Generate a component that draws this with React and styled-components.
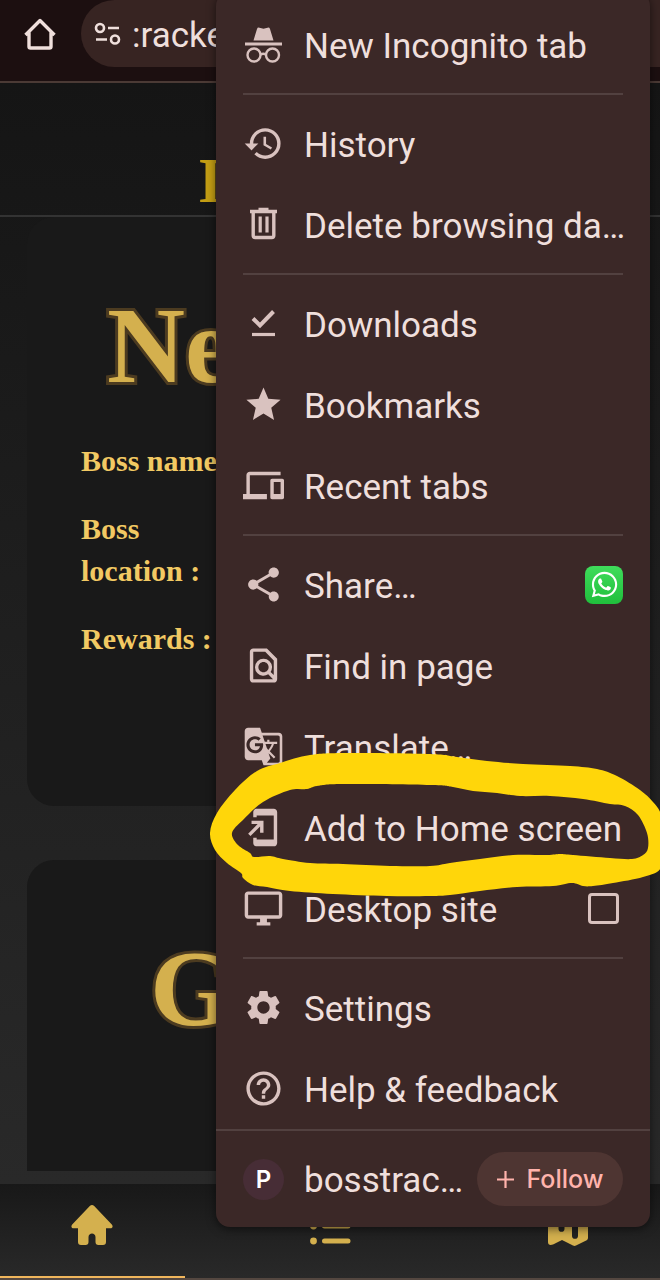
import React from 'react';
import styled, { createGlobalStyle } from 'styled-components';
import {
  MdHistory,
  MdStar,
  MdDevices,
  MdShare,
  MdOutlineFindInPage,
  MdGTranslate,
  MdAddToHomeScreen,
  MdOutlineDesktopWindows,
  MdSettings,
  MdHelpOutline,
} from 'react-icons/md';
import { FaWhatsapp } from 'react-icons/fa';

const color = {
  chrome: '#1c0f10',
  surface: '#3b2827',
  pill: '#372422',
  line: '#524140',
  text: '#efdfdc',
  icon: '#d9c2bf',
  gold: '#d4b04e',
  label: '#f2c963',
  card: '#191919',
};

const GlobalStyle = createGlobalStyle`
  *, *::before, *::after { box-sizing: border-box; }
  body {
    margin: 0;
    overflow-x: hidden;
    background: #161616;
    font-family: Roboto, "Liberation Sans", sans-serif;
  }
  button { font: inherit; color: inherit; border: 0; background: none; padding: 0; }
`;

const Screen = styled.div`
  position: relative;
  display: flex;
  flex-direction: column;
  min-height: 100vh;
  overflow: hidden;
`;

const BrowserBar = styled.header`
  display: flex;
  height: 83px;
  padding-left: 20px;
  background: ${color.chrome};
  border-bottom: 2px solid #4b3a35;
  color: ${color.text};
`;

const BarButton = styled.button`
  display: flex;
  align-items: center;
  justify-content: center;
  width: 40px;
  height: 68px;
`;

const AddressPill = styled.div`
  flex: 1;
  display: flex;
  align-items: center;
  gap: 10px;
  height: 67px;
  margin-left: 21px;
  padding-left: 13px;
  border-radius: 34px 0 0 34px;
  background: ${color.pill};
`;

const AddressText = styled.div`
  padding-top: 4px;
  font-size: 35px;
  line-height: 44px;
  white-space: nowrap;
`;

const Site = styled.div`
  flex: 1;
  display: flex;
  flex-direction: column;
  background: linear-gradient(#151515, #292929);
  font-family: "Liberation Serif", serif;
  font-weight: 700;
`;

const SiteHeader = styled.div`
  padding: 66px 0 2px 198px;
  border-bottom: 2px solid #333333;
  color: #c49e14;
  font-size: 64px;
  line-height: 64px;
`;

const Cards = styled.main`
  flex: 1;
  display: flex;
  flex-direction: column;
  gap: 54px;
  padding: 0 27px 13px;
`;

const Card = styled.section`
  flex: ${(p) => (p.$fill ? '1 0 auto' : 'none')};
  min-height: ${(p) => (p.$fill ? 0 : '589px')};
  padding: 81px 54px 0;
  border-radius: ${(p) => (p.$fill ? '27px 27px 0 0' : '27px')};
  background: ${color.card};
`;

const CardTitle = styled.h2`
  margin: 0 0 46px;
  padding-left: ${(p) => p.$indent}px;
  color: ${color.gold};
  font-size: 108px;
  line-height: 96px;
  -webkit-text-stroke: 6px #4c3b20;
  paint-order: stroke fill;
`;

const FieldList = styled.div`
  display: flex;
  flex-direction: column;
  gap: 26px;
  width: 140px;
  color: ${color.label};
  font-size: 30px;
  line-height: 42px;
`;

const TabBar = styled.nav`
  display: flex;
  justify-content: space-between;
  height: 96px;
  background: linear-gradient(#181818, #292929);
  border-bottom: 2px solid #544740;
`;

const Tab = styled.a`
  display: flex;
  justify-content: center;
  width: 28%;
  padding-top: 20px;
  border-bottom: 2px solid ${(p) => (p.$active ? '#f0b65c' : 'transparent')};
  color: ${color.gold};
`;

const Menu = styled.div`
  position: absolute;
  top: -8px;
  right: 10px;
  width: min(434px, calc(100% - 20px));
  padding-top: 12px;
  border-radius: 14px;
  background: ${color.surface};
  color: ${color.text};
  box-shadow: 0 2px 10px rgba(0, 0, 0, 0.55);
`;

const MenuItem = styled.button`
  position: relative;
  display: flex;
  align-items: center;
  gap: 20px;
  width: 100%;
  height: 81px;
  padding: 0 27px;
  font-size: 35px;
  line-height: 44px;
  text-align: left;
  white-space: nowrap;
`;

const ItemIcon = styled.span`
  flex: none;
  display: flex;
  color: ${color.icon};
  svg { width: 41px; height: 41px; }
`;

const ItemLabel = styled.span`
  flex: 1;
  padding-top: 4px;
`;

const Divider = styled.hr`
  height: 2px;
  margin: 8px 27px;
  border: 0;
  background: ${color.line};
`;

const ShareTarget = styled.span`
  display: flex;
  align-items: center;
  justify-content: center;
  width: 38px;
  height: 38px;
  border-radius: 8px;
  background: linear-gradient(#3fdc5b, #20bf3c);
  color: #ffffff;
`;

const Checkbox = styled.input`
  appearance: none;
  width: 31px;
  height: 31px;
  margin: 0 4px 0 0;
  border: 3px solid ${color.icon};
  border-radius: 4px;
`;

const MenuFooter = styled.div`
  display: flex;
  align-items: center;
  gap: 20px;
  height: 98px;
  padding: 0 27px;
  border-top: 2px solid ${color.line};
  font-size: 35px;
  line-height: 44px;
`;

const Avatar = styled.span`
  flex: none;
  display: flex;
  align-items: center;
  justify-content: center;
  width: 41px;
  height: 41px;
  border-radius: 50%;
  background: #472d36;
  color: #ffffff;
  font: 600 24px Inter, sans-serif;
`;

const FooterLabel = styled(ItemLabel)`
  width: 0;
  white-space: nowrap;
`;

const FollowButton = styled.button`
  && {
    flex: none;
    display: flex;
    align-items: center;
    justify-content: center;
    gap: 13px;
    width: 146px;
    height: 54px;
    margin-left: -8px;
    border-radius: 27px;
    background: #4e3532;
    color: #ffb3ac;
    font: 500 25px Inter, sans-serif;
  }
`;

const Marker = styled.svg`
  position: absolute;
  z-index: 1;
  top: -37px;
  left: -10px;
  pointer-events: none;
`;

// Closed Catmull-Rom curve through the points, as cubic Béziers.
function smoothLoop(points) {
  const n = points.length;
  const at = (i) => points[(i + n) % n];
  let d = `M${points[0].join(' ')}`;
  for (let i = 0; i < n; i += 1) {
    const [a, b, c, e] = [at(i - 1), at(i), at(i + 1), at(i + 2)];
    d += `C${b[0] + (c[0] - a[0]) / 6} ${b[1] + (c[1] - a[1]) / 6} ${c[0] - (e[0] - b[0]) / 6} ${c[1] - (e[1] - b[1]) / 6} ${c[0]} ${c[1]}`;
  }
  return `${d}Z`;
}

const OUTER = [
  [210, 833], [217, 813], [235, 790], [257, 771], [280, 763], [310, 755], [347, 753], [430, 754],
  [457, 757], [487, 761], [523, 764], [570, 766], [597, 769], [617, 776], [640, 790], [653, 802],
  [661, 814], [668, 840], [661, 868], [643, 877], [613, 883], [593, 886], [583, 886], [572, 883],
  [553, 886], [517, 887], [480, 891], [450, 895], [430, 896], [387, 896], [333, 894], [290, 891],
  [267, 887], [253, 885], [243, 878], [241, 873], [227, 863], [215, 850],
];
const INNER = [
  [232, 833], [243, 820], [263, 802], [290, 790], [307, 789], [317, 786], [343, 784], [430, 785],
  [453, 787], [473, 791], [497, 793], [520, 796], [550, 796], [583, 799], [610, 804], [625, 806],
  [638, 815], [647, 833], [648, 848], [643, 855], [632, 859], [610, 858], [573, 855], [560, 854],
  [547, 855], [513, 855], [480, 859], [450, 863], [430, 866], [390, 866], [343, 864], [310, 863],
  [283, 859], [270, 856], [254, 857], [250, 853], [238, 845],
];

const HandDrawnRing = () => (
  <Marker width="464" height="150" viewBox="206 750 464 150" aria-hidden="true">
    <path d={smoothLoop(OUTER) + smoothLoop(INNER)} fill="#ffd60a" fillRule="evenodd" />
  </Marker>
);

const HomeOutline = () => (
  <svg width="32" height="32" viewBox="0 0 32 32" fill="none" stroke="currentColor" strokeWidth="3.400">
    <path d="M1.500 17 16 2.500 30.500 17M5 14v14.500q0 1.500 1.500 1.500h19q1.500 0 1.500-1.500V14" strokeLinejoin="round" />
  </svg>
);

const TuneIcon = () => (
  <svg width="28" height="24" viewBox="0 0 28 24" fill="none" stroke="currentColor" strokeWidth="2.600">
    <circle cx="6" cy="6" r="4" />
    <path d="M14 6h11M2 17.500h11" />
    <circle cx="21" cy="17.500" r="4" />
  </svg>
);

const IncognitoIcon = () => (
  <svg viewBox="0 0 41 41" fill="none" stroke="currentColor">
    <path d="M10.500 16.500 14 5q.6-1.800 2.400-1.300l4.100 1 4.100-1Q26.400 3.200 27 5l3.500 11.500z" fill="currentColor" stroke="none" />
    <path d="M2 20h37" strokeWidth="3" />
    <g strokeWidth="2.400">
      <circle cx="11" cy="31" r="6.500" />
      <circle cx="29.500" cy="31" r="6.500" />
      <path d="M17.500 30.500q2.800-1.600 5.500 0" />
    </g>
  </svg>
);

const TrashIcon = () => (
  <svg viewBox="0 0 41 41" fill="none" stroke="currentColor" strokeWidth="3.400">
    <path d="M10.200 7v24.500q0 2 2 2h16.600q2 0 2-2V7" />
    <path d="M7 7.500h27M15.500 5.500h10" />
    <path d="M17.200 12.500v16M24 12.500v16" strokeWidth="3.200" />
  </svg>
);

const DownloadsIcon = () => (
  <svg viewBox="0 0 41 41" fill="none" stroke="currentColor">
    <path d="M10 15.500 17 22.500 30.500 8.500" strokeWidth="4" />
    <path d="M9 31.500h23" strokeWidth="3.200" />
  </svg>
);

const HomeIcon = () => (
  <svg width="42" height="42" viewBox="0 0 42 42" fill="currentColor">
    <path d="M18.800 2q2.200-2 4.400 0l17.600 18.600c1.600 1.800.6 3.600-1.400 3.600H35V38q0 3-3 3h-4.500q-3 0-3-3v-5c0-4.700-7-4.700-7 0v5q0 3-3 3H10q-3 0-3-3V24.200H2.600c-2 0-3-1.800-1.400-3.600z" />
  </svg>
);

const ListIcon = () => (
  <svg width="42" height="42" viewBox="0 0 42 42" fill="none" stroke="currentColor" strokeWidth="5" strokeLinecap="round">
    <path d="M15.500 7H39M15.500 22H39M15.500 37H39" />
    <g fill="currentColor" stroke="none">
      <circle cx="4.500" cy="7" r="3.400" />
      <circle cx="4.500" cy="22" r="3.400" />
      <circle cx="4.500" cy="37" r="3.400" />
    </g>
  </svg>
);

const MapIcon = () => (
  <svg width="42" height="42" viewBox="0 0 42 42" fill="currentColor">
    <path
      fillRule="evenodd"
      d="M1 8q0-1.500 1.300-2.200L12 1.300q1.500-.6 3 0L27 7l10-4.600q4-1.400 4 2V34q0 1.500-1.300 2.200L29 41.500q-1.500.8-3 0L15 36l-9 4.600Q1 42 1 38zM11.500 9v16c0 3.800 6 3.800 6 0V9c0-3.400-6-3.400-6 0zm13.500 7v16c0 3.800 6 3.800 6 0V16c0-3.400-6-3.400-6 0z"
    />
  </svg>
);

const PlusIcon = () => (
  <svg width="17" height="17" viewBox="0 0 17 17" stroke="currentColor" strokeWidth="2.200">
    <path d="M8.500 0v17M0 8.500h17" />
  </svg>
);

const sections = [
  [{ icon: IncognitoIcon, label: 'New Incognito tab' }],
  [
    { icon: MdHistory, label: 'History' },
    { icon: TrashIcon, label: 'Delete browsing da…' },
  ],
  [
    { icon: DownloadsIcon, label: 'Downloads' },
    { icon: MdStar, label: 'Bookmarks' },
    { icon: MdDevices, label: 'Recent tabs' },
  ],
  [
    { icon: MdShare, label: 'Share…', extra: <ShareTarget><FaWhatsapp size={29} /></ShareTarget> },
    { icon: MdOutlineFindInPage, label: 'Find in page' },
    { icon: MdGTranslate, label: 'Translate…' },
    { icon: MdAddToHomeScreen, label: 'Add to Home screen', extra: <HandDrawnRing /> },
    { icon: MdOutlineDesktopWindows, label: 'Desktop site', checkbox: true },
  ],
  [
    { icon: MdSettings, label: 'Settings' },
    { icon: MdHelpOutline, label: 'Help & feedback' },
  ],
];

export default function App() {
  return (
    <>
      <GlobalStyle />
      <Screen>
        <BrowserBar>
          <BarButton aria-label="Home"><HomeOutline /></BarButton>
          <AddressPill>
            <TuneIcon />
            <AddressText>:racke</AddressText>
          </AddressPill>
        </BrowserBar>

        <Site>
          <SiteHeader>I</SiteHeader>
          <Cards>
            <Card>
              <CardTitle $indent={26}>Ne</CardTitle>
              <FieldList>
                <div>Boss name</div>
                <div>Boss location :</div>
                <div>Rewards :</div>
              </FieldList>
            </Card>
            <Card $fill>
              <CardTitle $indent={69}>G</CardTitle>
            </Card>
          </Cards>
        </Site>

        <TabBar>
          <Tab href="#home" aria-label="Home" $active><HomeIcon /></Tab>
          <Tab href="#list" aria-label="List"><ListIcon /></Tab>
          <Tab href="#map" aria-label="Map"><MapIcon /></Tab>
        </TabBar>

        <Menu>
          {sections.map((items, s) => (
            <React.Fragment key={items[0].label}>
              {s > 0 && <Divider />}
              {items.map(({ icon: Icon, label, extra, checkbox }) => (
                <MenuItem
                  key={label}
                  as={checkbox ? 'label' : 'button'}
                  htmlFor={checkbox ? 'desktop-site' : undefined}
                >
                  <ItemIcon><Icon /></ItemIcon>
                  <ItemLabel>{label}</ItemLabel>
                  {extra}
                  {checkbox && <Checkbox id="desktop-site" type="checkbox" />}
                </MenuItem>
              ))}
            </React.Fragment>
          ))}
          <MenuFooter>
            <Avatar>P</Avatar>
            <FooterLabel>bosstrac…</FooterLabel>
            <FollowButton><PlusIcon />Follow</FollowButton>
          </MenuFooter>
        </Menu>
      </Screen>
    </>
  );
}
